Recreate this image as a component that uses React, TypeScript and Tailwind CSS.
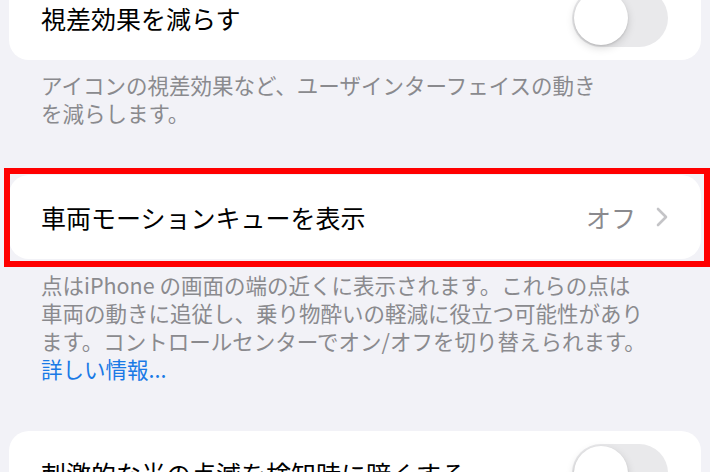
const jp = { fontFamily: '"Noto Sans CJK JP", "Noto Sans", sans-serif' }

function Toggle() {
    return (
        <div className="relative h-[58px] w-[96px] shrink-0 rounded-full bg-[#e9e9eb]">
            <div className="absolute left-[2px] top-[2px] h-[54px] w-[54px] rounded-full bg-white shadow-[0_3px_8px_rgba(0,0,0,0.15),0_1px_2px_rgba(0,0,0,0.12)]" />
        </div>
    )
}

function Row({ title, children }: { title: string; children?: React.ReactNode }) {
    return (
        <div className="flex h-[84px] items-center justify-between rounded-[20px] bg-white pl-[32px] pr-[33px]">
            <span className="text-[25px] leading-none text-black">{title}</span>
            {children}
        </div>
    )
}

export default function App() {
    return (
        <div
            className="h-[472px] w-[710px] overflow-hidden bg-[#f2f2f7] px-[9px]"
            style={jp}
        >
            <div className="-mt-[24px]">
                <Row title="視差効果を減らす">
                    <Toggle />
                </Row>
            </div>
            <p className="mt-[11px] pl-[32px] text-[21.5px] leading-[28px] text-[#8a8a8e]">
                アイコンの視差効果など、ユーザインターフェイスの動き
                <br />
                を減らします。
            </p>

            <div className="relative mt-[48px]">
                <Row title="車両モーションキューを表示">
                    <div className="flex items-center gap-[20px]">
                        <span className="text-[25px] leading-none text-[#8a8a8e]">オフ</span>
                        <svg width="12" height="20" viewBox="0 0 12 20" fill="none">
                            <path
                                d="M2 2l8 8-8 8"
                                stroke="#c4c4c7"
                                strokeWidth="2.6"
                                strokeLinecap="round"
                                strokeLinejoin="round"
                            />
                        </svg>
                    </div>
                </Row>
                <div className="pointer-events-none absolute -bottom-[8px] -left-[5px] -right-[9px] -top-[7px] border-[6px] border-[#ff0000]" />
            </div>
            <p className="mt-[12px] pl-[32px] text-[21.5px] leading-[28px] text-[#8a8a8e]">
                点はiPhone の画面の端の近くに表示されます。これらの点は
                <br />
                車両の動きに追従し、乗り物酔いの軽減に役立つ可能性があり
                <br />
                ます。コントロールセンターでオン/オフを切り替えられます。
                <br />
                <span className="text-[#1a7ae6]">詳しい情報...</span>
            </p>

            <div className="mt-[48px]">
                <Row title="刺激的な光の点滅を検知時に暗くする">
                    <Toggle />
                </Row>
            </div>
        </div>
    )
}
